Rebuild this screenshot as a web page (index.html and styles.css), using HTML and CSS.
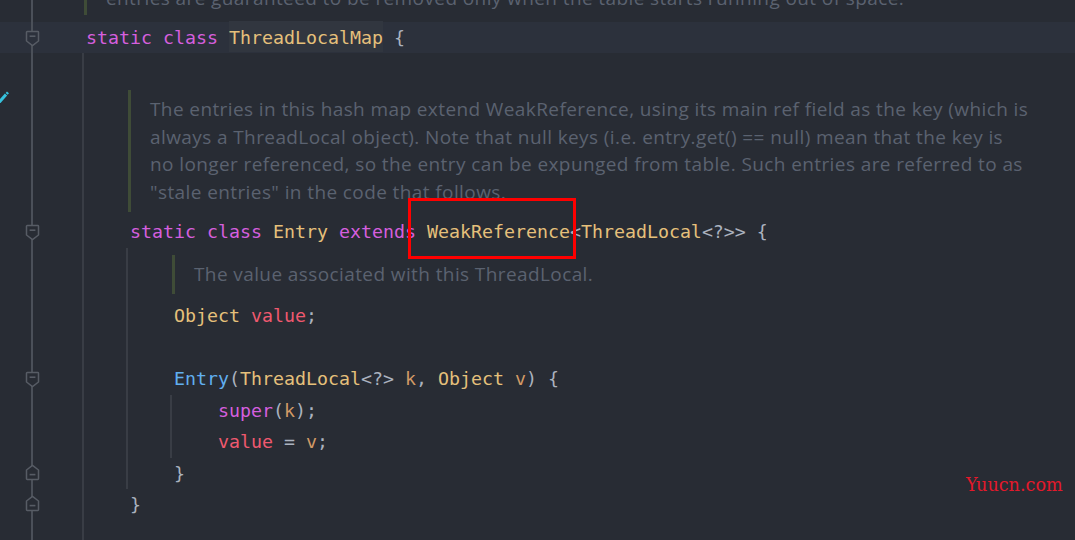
FILE: index.html
```html
<!DOCTYPE html>
<html>
<head>
<meta charset="utf-8">
<link rel="stylesheet" href="styles.css">
</head>
<body>
<div class="editor">
  <div class="row doc-row first">
    <div class="gutter"></div>
    <div class="doc d0"><div class="dl">entries are guaranteed to be removed only when the table starts running out of space.</div></div>
  </div>

  <div class="row current">
    <div class="gutter"><svg class="fold down" width="15" height="17" viewBox="0 0 15 17"><path class="shape" d="M2.2 1.5H12.8Q13.5 1.5 13.5 2.2V11L7.5 15.6L1.5 11V2.2Q1.5 1.5 2.2 1.5Z"/><path class="dash" d="M4.6 6.2H10.4"/></svg></div>
    <div class="code i0"><span class="kw">static</span> <span class="kw">class</span> <span class="ty sel">ThreadLocalMap</span> {</div>
  </div>

  <div class="row g1">
    <div class="gutter"></div>
    <div class="code i0"></div>
  </div>

  <div class="row g1 doc-row d1-row">
    <div class="gutter"><svg class="pencil" width="9" height="12" viewBox="0 0 9 12"><path d="M-1 11.5L6 3.5" /><path class="tip" d="M6.3 1.2L8.3 3" /></svg></div>
    <div class="doc d1">
      <div class="dl">The entries in this hash map extend WeakReference, using its main ref field as the key (which is</div>
      <div class="dl">always a ThreadLocal object). Note that null keys (i.e. entry.get() == null) mean that the key is</div>
      <div class="dl">no longer referenced, so the entry can be expunged from table. Such entries are referred to as</div>
      <div class="dl">"stale entries" in the code that follows.</div>
    </div>
  </div>

  <div class="row g1">
    <div class="gutter"><svg class="fold down" width="15" height="17" viewBox="0 0 15 17"><path class="shape" d="M2.2 1.5H12.8Q13.5 1.5 13.5 2.2V11L7.5 15.6L1.5 11V2.2Q1.5 1.5 2.2 1.5Z"/><path class="dash" d="M4.6 6.2H10.4"/></svg></div>
    <div class="code i1"><span class="kw">static</span> <span class="kw">class</span> <span class="ty">Entry</span> <span class="kw">extends</span> <span class="ty mark">WeakReference</span>&lt;<span class="ty">ThreadLocal</span>&lt;?&gt;&gt; {</div>
  </div>

  <div class="row g2 doc-row d2-row">
    <div class="gutter"></div>
    <div class="doc d2"><div class="dl">The value associated with this ThreadLocal.</div></div>
  </div>

  <div class="row g2">
    <div class="gutter"></div>
    <div class="code i2"><span class="ty">Object</span> <span class="fd">value</span>;</div>
  </div>

  <div class="row g2">
    <div class="gutter"></div>
    <div class="code i2"></div>
  </div>

  <div class="row g2">
    <div class="gutter"><svg class="fold down" width="15" height="17" viewBox="0 0 15 17"><path class="shape" d="M2.2 1.5H12.8Q13.5 1.5 13.5 2.2V11L7.5 15.6L1.5 11V2.2Q1.5 1.5 2.2 1.5Z"/><path class="dash" d="M4.6 6.2H10.4"/></svg></div>
    <div class="code i2"><span class="fn">Entry</span>(<span class="ty">ThreadLocal</span>&lt;?&gt; <span class="pm">k</span>, <span class="ty">Object</span> <span class="pm">v</span>) {</div>
  </div>

  <div class="row g3">
    <div class="gutter"></div>
    <div class="code i3"><span class="kw">super</span>(<span class="pm">k</span>);</div>
  </div>

  <div class="row g3">
    <div class="gutter"></div>
    <div class="code i3"><span class="fd">value</span> = <span class="pm">v</span>;</div>
  </div>

  <div class="row g2">
    <div class="gutter"><svg class="fold up" width="15" height="17" viewBox="0 0 15 17"><path class="shape" d="M7.5 1.4L13.5 6V14.8Q13.5 15.5 12.8 15.5H2.2Q1.5 15.5 1.5 14.8V6Z"/><path class="dash" d="M4.6 10.6H10.4"/></svg></div>
    <div class="code i2">}</div>
  </div>

  <div class="row g1">
    <div class="gutter"><svg class="fold up" width="15" height="17" viewBox="0 0 15 17"><path class="shape" d="M7.5 1.4L13.5 6V14.8Q13.5 15.5 12.8 15.5H2.2Q1.5 15.5 1.5 14.8V6Z"/><path class="dash" d="M4.6 10.6H10.4"/></svg></div>
    <div class="code i1">}</div>
  </div>

  <div class="row g1 filler">
    <div class="gutter"></div>
  </div>

  <div class="watermark">Yuucn.com</div>
</div>
</body>
</html>
```

FILE: styles.css
```css
html, body {
  margin: 0;
  padding: 0;
  background: #282c34;
  overflow: hidden;
}

.editor {
  position: relative;
  display: flex;
  flex-direction: column;
  height: 540px;
  overflow: hidden;
  background: #282c34;
  color: #abb2bf;
  font-family: "DejaVu Sans Mono", monospace;
  font-size: 18.27px;
}

.row {
  --rowbg: #282c34;
  display: flex;
  flex: none;
  background-color: var(--rowbg);
  background-repeat: no-repeat;
  background-image: linear-gradient(#4b5059, #4b5059);
  background-position: 31px 0;
  background-size: 2px 100%;
}

.row.g1 {
  background-image: linear-gradient(#4b5059, #4b5059), linear-gradient(#393d45, #393d45);
  background-position: 31px 0, 82px 0;
  background-size: 2px 100%, 2px 100%;
}

.row.g2 {
  background-image: linear-gradient(#4b5059, #4b5059), linear-gradient(#393d45, #393d45), linear-gradient(#393d45, #393d45);
  background-position: 31px 0, 82px 0, 126px 0;
  background-size: 2px 100%, 2px 100%, 2px 100%;
}

.row.g3 {
  background-image: linear-gradient(#4b5059, #4b5059), linear-gradient(#393d45, #393d45), linear-gradient(#393d45, #393d45), linear-gradient(#393d45, #393d45);
  background-position: 31px 0, 82px 0, 126px 0, 170px 0;
  background-size: 2px 100%, 2px 100%, 2px 100%, 2px 100%;
}

.row.current {
  --rowbg: #2c313c;
}

.row.doc-row {
  padding-top: 5px;
  padding-bottom: 4px;
}

.row.first.doc-row {
  margin-top: -21.5px;
  padding-top: 0;
  padding-bottom: 6.5px;
}

.row.d1-row {
  padding-top: 5.5px;
  padding-bottom: 4px;
}

.row.d2-row {
  padding-top: 7px;
  padding-bottom: 6px;
}

.row.filler {
  flex: 1;
}

.gutter {
  width: 66px;
  flex: none;
}

.fold {
  display: block;
  margin-left: 25px;
}

.fold.down { margin-top: 8px; }
.fold.up { margin-top: 6px; }

.fold .shape {
  fill: var(--rowbg);
  stroke: #575c65;
  stroke-width: 1.5;
  stroke-linejoin: round;
}

.fold .dash {
  stroke: #575c65;
  stroke-width: 1.6;
}

.pencil {
  display: block;
  margin-top: 1px;
}

.pencil path {
  stroke: #36c2dd;
  stroke-width: 3;
  fill: none;
}

.pencil .tip {
  stroke-width: 2;
}

.code {
  height: 31.5px;
  box-sizing: border-box;
  padding-top: 2px;
  line-height: 28px;
  white-space: pre;
}

.i0 { padding-left: 20px; }
.i1 { padding-left: 64px; }
.i2 { padding-left: 108px; }
.i3 { padding-left: 152px; }

.kw { color: #d55fde; }
.ty { color: #e5c07b; }
.fn { color: #61afef; }
.fd { color: #ef596f; }
.pm { color: #d19a66; }

.sel {
  background: #31363f;
  padding: 5.5px 0 4.5px;
}

.mark {
  position: relative;
}

.mark::after {
  content: "";
  position: absolute;
  left: -19px;
  top: -23px;
  width: 168px;
  height: 61px;
  box-sizing: border-box;
  border: 3px solid #ff0000;
}

.doc {
  font-family: "Open Sans", "Noto Sans", sans-serif;
  font-size: 19px;
  letter-spacing: 0.4px;
  line-height: 27.5px;
  color: #5b6270;
  border-left: 3px solid #3f4c37;
  padding: 6px 0 6px 19px;
  white-space: nowrap;
}

.d0 { margin-left: 18px; padding-bottom: 3px; }
.d1 { margin-left: 62px; }
.d2 { margin-left: 106px; }

.watermark {
  position: absolute;
  left: 966px;
  top: 475px;
  font-family: "DejaVu Serif", "Liberation Serif", serif;
  font-size: 17.6px;
  line-height: 20px;
  color: #e3192b;
}
```
